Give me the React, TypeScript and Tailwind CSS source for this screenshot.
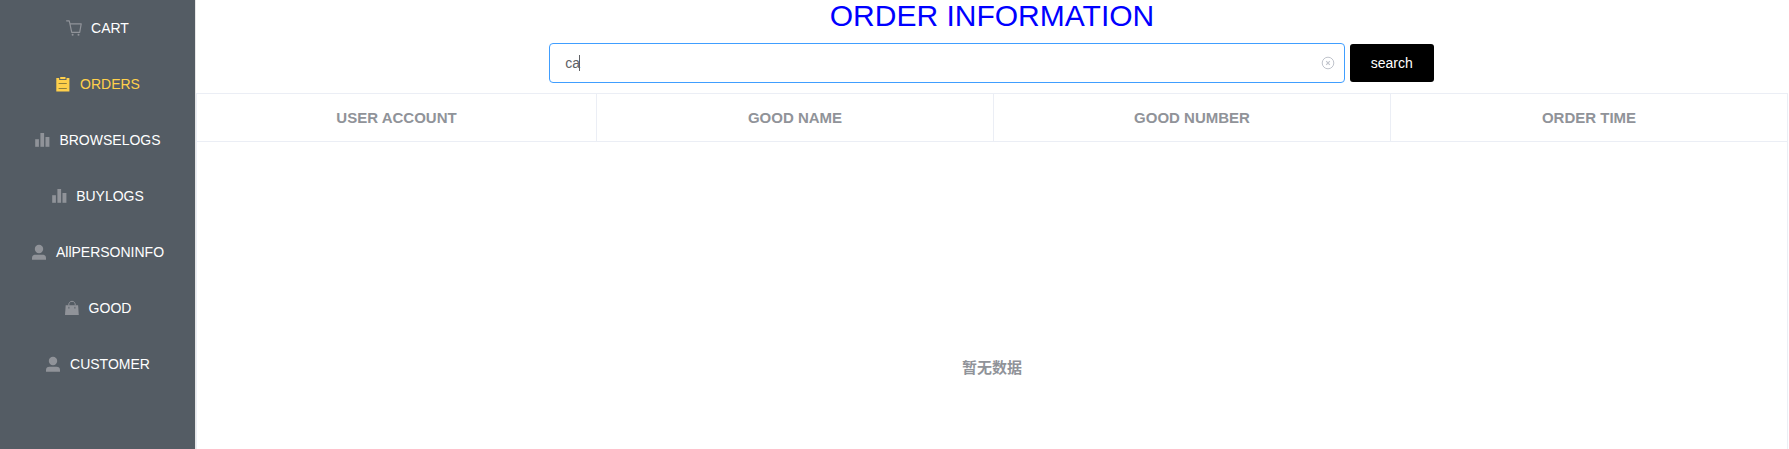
import { useState, type ReactNode } from "react";

function Glyph({ children }: { children: ReactNode }) {
  return (
    <span className="flex w-6 shrink-0 justify-center">
      <svg viewBox="0 0 18 18" className="size-[18px]" fill="currentColor" aria-hidden="true">
        {children}
      </svg>
    </span>
  );
}

const CartIcon = () => (
  <Glyph>
    <g fill="none" stroke="currentColor" strokeWidth="1.2" strokeLinecap="round" strokeLinejoin="round">
      <path d="M1.6 1.8H4.2L4.9 4.7L6.7 13.4H14.7L16.2 4.9H5" />
    </g>
    <circle cx="7.6" cy="15.8" r="1" />
    <circle cx="13.5" cy="15.8" r="1" />
  </Glyph>
);

const OrderIcon = () => (
  <Glyph>
    <path d="M2.3 3H5.2V5H12.5V3H15.4V16.6H2.3Z" />
    <path d="M6.2 2H11.5V4.1H6.2Z" />
    <path d="M4.6 8.5H12.8M4.6 13.5H12.8" stroke="#92803a" strokeWidth="1" />
  </Glyph>
);

const BarsIcon = () => (
  <Glyph>
    <rect x="2.2" y="8.2" width="3.7" height="7.6" />
    <rect x="7.4" y="2" width="3.7" height="13.8" />
    <rect x="12.5" y="6" width="3.9" height="9.8" />
  </Glyph>
);

const UserIcon = () => (
  <Glyph>
    <circle cx="9" cy="6" r="4.2" />
    <path d="M2 16.7V15C2 13 3.4 11.8 5.4 11.8H12.6C14.6 11.8 16 13 16 15V16.7Z" />
  </Glyph>
);

const BagIcon = () => (
  <Glyph>
    <path d="M5.7 6.4C5.7 3.7 7 2.3 9 2.3S12.3 3.7 12.3 6.4" fill="none" stroke="currentColor" strokeWidth="1" />
    <path d="M2.7 6.3H15.1L15.8 15.9H2Z" />
    <path d="M5.9 7.8V9.6M11.9 7.8V9.6" stroke="#545c64" strokeWidth="0.9" />
  </Glyph>
);

const menu = [
  { label: "CART", Icon: CartIcon },
  { label: "ORDERS", Icon: OrderIcon, active: true },
  { label: "BROWSELOGS", Icon: BarsIcon },
  { label: "BUYLOGS", Icon: BarsIcon },
  { label: "AllPERSONINFO", Icon: UserIcon },
  { label: "GOOD", Icon: BagIcon },
  { label: "CUSTOMER", Icon: UserIcon },
];

export default function App() {
  const [query, setQuery] = useState("ca");
  return (
    <div className="flex h-screen overflow-hidden bg-white font-['Liberation_Sans','Noto_Sans_CJK_SC',sans-serif] text-sm">
      <nav className="w-[196px] shrink-0 border-r border-[#e6e6e6] bg-[#545c64]">
        <ul>
          {menu.map(({ label, Icon, active }) => (
            <li key={label}>
              <a
                href="#"
                aria-current={active ? "page" : undefined}
                className={`flex h-14 items-center justify-center gap-[5px] pr-1 ${active ? "text-[#ffd04b]" : "text-[#909399]"}`}
              >
                <Icon />
                <span className={active ? "text-[#ffd04b]" : "text-white"}>{label}</span>
              </a>
            </li>
          ))}
        </ul>
      </nav>

      <main className="min-w-0 flex-1 pr-px">
        <h1 className="pb-3 text-center text-[30px] leading-[31px] text-[#0000ff]">ORDER INFORMATION</h1>
        <form
          className="flex items-center justify-center gap-[5px] pr-px"
          onSubmit={(e) => e.preventDefault()}
        >
          <div className="relative w-1/2">
            <input
              type="text"
              aria-label="Search orders"
              value={query}
              onChange={(e) => setQuery(e.target.value)}
              className="block h-10 w-full rounded border border-[#409eff] bg-white pr-[30px] pl-[15px] text-[#606266] caret-transparent outline-none"
            />
            <span className="pointer-events-none absolute inset-y-3 left-[15px] flex">
              <span className="invisible whitespace-pre">{query}</span>
              <span className="h-4 w-px bg-[#606266]" />
            </span>
            <button
              type="button"
              aria-label="Clear"
              onClick={() => setQuery("")}
              className="absolute inset-y-0 right-[10px] flex items-center text-[#c0c4cc]"
            >
              <svg viewBox="0 0 14 14" className="size-3.5" fill="none" stroke="currentColor" aria-hidden="true">
                <circle cx="7" cy="7" r="5.8" />
                <path d="M5.2 5.2L8.8 8.8M8.8 5.2L5.2 8.8" strokeWidth="1.1" />
              </svg>
            </button>
          </div>
          <button type="submit" className="h-[38px] rounded-[3px] bg-black px-[21px] text-white">
            search
          </button>
        </form>

        <table className="mt-[10px] w-full table-fixed border-separate border-spacing-0 border-t border-l border-[#ebeef5] text-[15px] text-[#909399]">
          <thead>
            <tr>
              <th className="h-12 w-[400px] border-r border-b border-[#ebeef5] font-bold">USER ACCOUNT</th>
              <th className="border-r border-b border-[#ebeef5] font-bold">GOOD NAME</th>
              <th className="border-r border-b border-[#ebeef5] font-bold">GOOD NUMBER</th>
              <th className="border-r border-b border-[#ebeef5] font-bold">ORDER TIME</th>
            </tr>
          </thead>
          <tbody>
            <tr>
              <td colSpan={4} className="h-[452px] border-r border-[#ebeef5] text-center align-middle font-bold">
                暂无数据
              </td>
            </tr>
          </tbody>
        </table>
      </main>
    </div>
  );
}
